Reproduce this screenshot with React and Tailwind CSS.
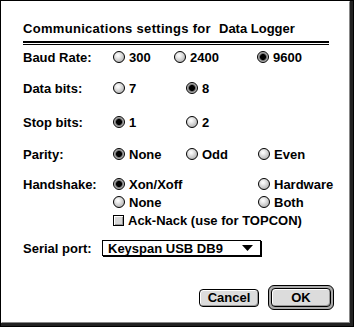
const font = { fontFamily: '"Liberation Sans", Arial, sans-serif' }

function Radio({ on, label, w }) {
  return (
    <div className="flex items-center" style={w ? { width: w } : undefined}>
      <span
        className={`box-border h-[12px] w-[12px] shrink-0 rounded-full border border-black ${
          on
            ? 'bg-[radial-gradient(circle,#000_0,#000_2.6px,#555_3.2px,#9a9a9a_4px,#e0e0e0_6px)]'
            : 'bg-[radial-gradient(circle_at_40%_35%,#ffffff_0,#f0f0f0_20%,#b8b8b8_75%,#8a8a8a_100%)]'
        }`}
      />
      <span className="ml-[4px] whitespace-nowrap">{label}</span>
    </div>
  )
}

function Row({ label, className = '', children }) {
  return (
    <div className={`flex h-[18px] items-center ${className}`}>
      <div className="w-[90px] shrink-0 whitespace-nowrap">{label}</div>
      <div className="flex items-center">{children}</div>
    </div>
  )
}

export default function App() {
  return (
    <div
      className="h-[327px] w-[354px] bg-white text-[13px] font-bold leading-none text-black antialiased"
      style={font}
    >
      <div className="box-border h-full w-full border border-black">
        <div className="box-border h-full w-full border-r-[3px] border-b-[3px] border-r-[#222] border-b-[#222]">
          <div className="box-border h-full w-full border-t border-l border-r border-b border-t-white border-l-white border-r-[#888] border-b-[#888] pl-[21px]">
            <div className="mt-[18px] flex h-[16px] items-center">
              <span className="w-[196px] whitespace-nowrap tracking-[0.3px]">Communications settings for</span>
              <span className="whitespace-nowrap">Data Logger</span>
            </div>
            <div className="mt-[5px] w-[306px] border-t-2 border-black" />
            <div className="mt-[1px] w-[306px] border-t border-black" />

            <Row label="Baud Rate:" className="mt-[3px]">
              <Radio label="300" w={61} />
              <Radio label="2400" w={83} />
              <Radio on label="9600" />
            </Row>
            <Row label="Data bits:" className="mt-[13px]">
              <Radio label="7" w={73} />
              <Radio on label="8" />
            </Row>
            <Row label="Stop bits:" className="mt-[16px]">
              <Radio on label="1" w={73} />
              <Radio label="2" />
            </Row>
            <Row label="Parity:" className="mt-[14px]">
              <Radio on label="None" w={73} />
              <Radio label="Odd" w={72} />
              <Radio label="Even" />
            </Row>
            <Row label="Handshake:" className="mt-[12px]">
              <Radio on label="Xon/Xoff" w={145} />
              <Radio label="Hardware" />
            </Row>
            <Row label="">
              <Radio label="None" w={145} />
              <Radio label="Both" />
            </Row>
            <Row label="">
              <div className="flex items-center">
                <span className="box-border h-[11px] w-[11px] border border-black bg-[#d6d6d6] shadow-[inset_1px_1px_0_#fff,inset_-1px_-1px_0_#999]" />
                <span className="ml-[4px] whitespace-nowrap">Ack-Nack (use for TOPCON)</span>
              </div>
            </Row>

            <div className="mt-[10px] flex h-[18px] items-center">
              <div className="w-[79px] shrink-0 whitespace-nowrap">Serial port:</div>
              <div className="box-border flex h-[16px] w-[159px] items-center justify-between border border-black bg-white pl-[5px] pr-[7px] shadow-[1px_1px_0_#000]">
                <span className="whitespace-nowrap">Keyspan USB DB9</span>
                <svg width="11" height="6" viewBox="0 0 11 6">
                  <path d="M0 0H11L5.5 6Z" fill="#000" />
                </svg>
              </div>
            </div>

            <div className="mt-[28px] flex items-center">
              <div className="ml-[176px] box-border flex h-[18px] w-[60px] items-center justify-center rounded-[4px] border border-black bg-[#dcdcdc] shadow-[inset_1px_1px_0_#fff,inset_-1px_-1px_0_#999]">
                Cancel
              </div>
              <div className="ml-[9px] box-border flex h-[25px] w-[66px] items-center justify-center rounded-[6px] border border-black bg-[#aaa] p-[2px]">
                <div className="box-border flex h-full w-full items-center justify-center rounded-[4px] border border-black bg-[#dcdcdc] shadow-[inset_1px_1px_0_#fff,inset_-1px_-1px_0_#999]">
                  OK
                </div>
              </div>
            </div>
          </div>
        </div>
      </div>
    </div>
  )
}
